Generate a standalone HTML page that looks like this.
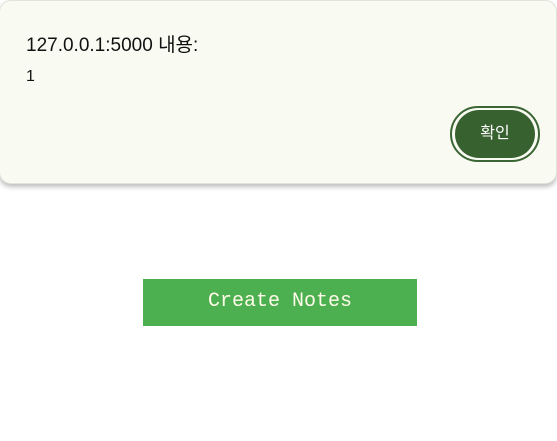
<!DOCTYPE html>
<html><head><meta charset="utf-8"><style>
body{margin:0;width:557px;height:441px;background:#fff;position:relative;overflow:hidden;font-family:"Liberation Sans","Noto Sans CJK KR",sans-serif}
.dlg{position:absolute;left:-1px;top:0;width:556px;height:182px;background:#f9fbf2;border:1px solid #e2e4dc;border-radius:12px;box-shadow:0 3px 5px rgba(0,0,0,.25)}
.t{position:absolute;left:26px;top:30px;font-size:19px;color:#111}
.m{position:absolute;left:26px;top:68px;font-size:16px;color:#111}
.ring{position:absolute;left:450px;top:106px;width:86px;height:52px;border:2px solid #3b6534;border-radius:30px}
.btn{position:absolute;left:455px;top:110px;width:80px;height:48px;background:#386130;border-radius:24px;color:#fff;font-size:16px;text-align:center;line-height:48px}
.cn{position:absolute;left:143px;top:279px;width:274px;height:47px;background:#4caf50;color:#fffbe8;font-family:"Liberation Mono",monospace;font-size:20px;text-align:center;line-height:46px}
</style></head><body>
<div class="dlg"></div>
<div class="t">127.0.0.1:5000 내용:</div>
<div class="m">1</div>
<div class="ring"></div>
<div class="btn">확인</div>
<div class="cn">Create Notes</div>
</body></html>
